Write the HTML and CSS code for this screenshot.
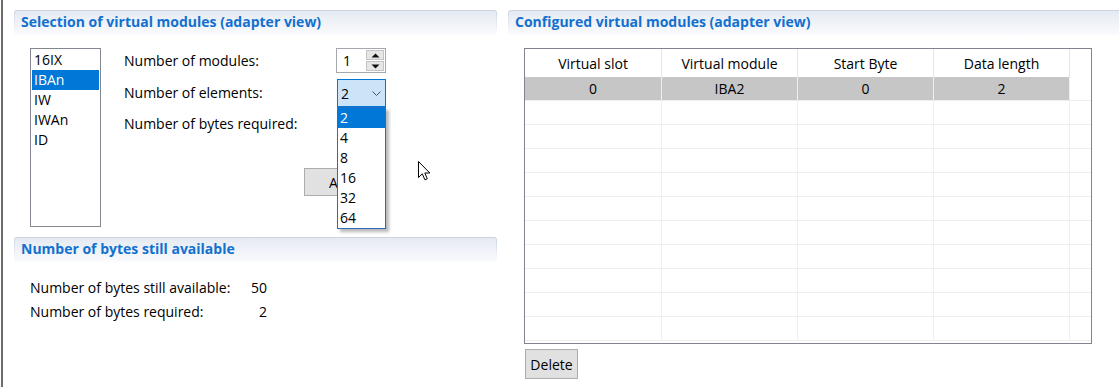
FILE: index.html
```html
<!DOCTYPE html>
<html>
<head>
<meta charset="utf-8">
<link rel="stylesheet" href="styles.css">
</head>
<body>
<div class="frame">
  <div class="col-left">
    <section class="sec">
      <div class="sec-head"><div class="sec-head-in">Selection of virtual modules (adapter view)</div></div>
      <div class="select-body">
        <ul class="listbox">
          <li>16IX</li>
          <li class="sel">IBAn</li>
          <li>IW</li>
          <li>IWAn</li>
          <li>ID</li>
        </ul>
        <div class="form">
          <div class="frow r1">
            <span class="lbl">Number of modules:</span>
            <div class="spinner">
              <span class="spin-val">1</span>
              <div class="spin-btns">
                <span class="spin-btn"><svg width="9" height="5" viewBox="0 0 9 5"><path d="M0.5 4.5 L4.5 0.5 L8.5 4.5 Z" fill="#111"/></svg></span>
                <span class="spin-btn"><svg width="9" height="5" viewBox="0 0 9 5"><path d="M0.5 0.5 L4.5 4.5 L8.5 0.5 Z" fill="#111"/></svg></span>
              </div>
            </div>
          </div>
          <div class="frow r2">
            <span class="lbl">Number of elements:</span>
            <div class="combo-wrap">
              <div class="combo">
                <span>2</span>
                <svg class="chev" width="9" height="5" viewBox="0 0 9 5"><path d="M0.5 0.5 L4.5 4.5 L8.5 0.5" fill="none" stroke="#555" stroke-width="1"/></svg>
              </div>
              <ul class="popup">
                <li class="sel">2</li>
                <li>4</li>
                <li>8</li>
                <li>16</li>
                <li>32</li>
                <li>64</li>
              </ul>
            </div>
          </div>
          <div class="frow r3">
            <span class="lbl">Number of bytes required:</span>
          </div>
          <button class="btn add-btn">Add</button>
        </div>
      </div>
    </section>
    <section class="sec">
      <div class="sec-head"><div class="sec-head-in">Number of bytes still available</div></div>
      <div class="avail-body">
        <span>Number of bytes still available:</span><span class="val">50</span>
        <span>Number of bytes required:</span><span class="val">2</span>
      </div>
    </section>
  </div>
  <div class="col-right">
    <section class="sec">
      <div class="sec-head"><div class="sec-head-in">Configured virtual modules (adapter view)</div></div>
      <div class="right-body">
        <div class="grid-box">
          <table class="grid">
            <colgroup><col class="c1"><col class="c2"><col class="c3"><col class="c4"><col></colgroup>
            <thead>
              <tr><th>Virtual slot</th><th>Virtual module</th><th>Start Byte</th><th>Data length</th><th></th></tr>
            </thead>
            <tbody>
              <tr class="selrow"><td>0</td><td>IBA2</td><td>0</td><td>2</td><td class="filler"></td></tr>
              <tr><td></td><td></td><td></td><td></td><td></td></tr>
              <tr><td></td><td></td><td></td><td></td><td></td></tr>
              <tr><td></td><td></td><td></td><td></td><td></td></tr>
              <tr><td></td><td></td><td></td><td></td><td></td></tr>
              <tr><td></td><td></td><td></td><td></td><td></td></tr>
              <tr><td></td><td></td><td></td><td></td><td></td></tr>
              <tr><td></td><td></td><td></td><td></td><td></td></tr>
              <tr><td></td><td></td><td></td><td></td><td></td></tr>
              <tr><td></td><td></td><td></td><td></td><td></td></tr>
              <tr><td></td><td></td><td></td><td></td><td></td></tr>
            </tbody>
          </table>
        </div>
        <button class="btn del-btn">Delete</button>
      </div>
    </section>
  </div>
</div>
<svg class="cursor" width="13" height="20" viewBox="0 0 13 20"><path d="M0.5 0.5 L0.5 16.5 L4.3 12.8 L6.9 18.8 L9.3 17.8 L6.8 12 L11.8 12 Z" fill="#fff" stroke="#000" stroke-width="1" stroke-linejoin="miter"/></svg>
</body>
</html>
```
FILE: styles.css
```css
* { box-sizing: border-box; }
html, body { margin: 0; padding: 0; background: #fff; }
body {
  width: 1119px;
  height: 387px;
  overflow: hidden;
  position: relative;
  font-family: "Open Sans", "Noto Sans", sans-serif;
  font-size: 14px;
  color: #000;
}
.frame {
  margin-left: 1px;
  height: 387px;
  border-left: 2px solid #6c6c6c;
  display: flex;
  gap: 11px;
  padding: 10px 0 0 11px;
}
.col-left { flex: 0 0 483px; display: flex; flex-direction: column; }
.col-right { flex: 0 0 640px; }
ul { list-style: none; margin: 0; padding: 0; }

.sec-head {
  height: 25px;
  padding: 1px 1px 0 1px;
  border-radius: 3px 3px 0 0;
  background: linear-gradient(to bottom, #c9d3e1, #ffffff);
}
.sec-head-in {
  height: 24px;
  border-radius: 2px 2px 0 0;
  background: linear-gradient(to bottom, #e5eaf3, #fafbfd);
  color: #1270cf;
  font-weight: bold;
  font-size: 14px;
  line-height: 22px;
  padding-left: 6px;
  white-space: nowrap;
}

.select-body {
  display: flex;
  align-items: flex-start;
  gap: 23px;
  padding: 13px 0 10px 16px;
}
.listbox {
  width: 71px;
  height: 179px;
  border: 1px solid #828790;
  padding: 1px;
}
.listbox li {
  height: 20px;
  line-height: 20px;
  padding-left: 2px;
}
.listbox li.sel { background: #0078d7; color: #fff; }

.form { display: flex; flex-direction: column; }
.frow {
  display: grid;
  grid-template-columns: 212px 50px;
  align-items: center;
}
.r1 { height: 25px; }
.r2 { height: 28px; margin-top: 6px; }
.r3 { height: 20px; margin-top: 7px; }
.lbl { line-height: 20px; white-space: nowrap; }

.spinner {
  width: 50px;
  height: 25px;
  border: 1px solid #a4a7ad;
  display: flex;
  align-items: stretch;
}
.spin-val { flex: 1; padding-left: 6px; line-height: 23px; }
.spin-btns {
  width: 19px;
  display: flex;
  flex-direction: column;
  gap: 1px;
  padding: 1px 1px 1px 0;
}
.spin-btn {
  flex: 1;
  background: #e6e6e6;
  border: 1px solid #c4c4c4;
  display: flex;
  align-items: center;
  justify-content: center;
}
.spin-btn svg { display: block; }

.combo-wrap { position: relative; margin-left: 1px; width: 49px; height: 28px; }
.combo {
  height: 28px;
  border: 1px solid #0078d7;
  background: #cce4f7;
  display: flex;
  align-items: center;
  justify-content: space-between;
  padding: 0 4px 0 3px;
}
.chev { display: block; }
.popup {
  position: absolute;
  top: 28px;
  left: 0;
  width: 49px;
  border: 1px solid #2a6cc0;
  background: #fff;
  box-shadow: 3px 3px 3px rgba(0, 0, 0, 0.28);
  z-index: 5;
}
.popup li { height: 20px; line-height: 20px; padding-left: 2px; }
.popup li.sel { background: #0078d7; color: #fff; }

.btn {
  font-family: inherit;
  font-size: 14px;
  color: #000;
  background: #e1e1e1;
  border: 1px solid #adadad;
  padding: 0;
  margin: 0;
}
.add-btn { width: 76px; height: 28px; margin-top: 34px; margin-left: 180px; }

.avail-body {
  display: grid;
  grid-template-columns: 221px 16px;
  grid-auto-rows: 24px;
  align-items: center;
  padding: 13px 0 0 16px;
  white-space: nowrap;
}
.avail-body .val { text-align: right; }

.right-body { padding: 13px 0 0 16px; }
.grid-box {
  width: 568px;
  height: 296px;
  border: 1px solid #80848d;
  overflow: hidden;
}
.grid {
  border-collapse: separate;
  border-spacing: 0;
  table-layout: fixed;
  width: 566px;
}
.grid col.c1 { width: 137px; }
.grid col.c2, .grid col.c3, .grid col.c4 { width: 136px; }
.grid th {
  height: 28px;
  font-weight: normal;
  text-align: center;
  border-right: 1px solid #e5e5e5;
  padding: 0;
  line-height: 27px;
  vertical-align: middle;
}
.grid td {
  height: 24px;
  padding: 0;
  text-align: center;
  border-right: 1px solid #efefef;
  border-bottom: 1px solid #efefef;
  background-clip: padding-box;
  line-height: 22px;
}
.grid th:last-child, .grid td:last-child { border-right: none; }
.grid tr.selrow td { background-color: #c6c6c6; }
.grid tr.selrow td.filler { background-color: transparent; }
.del-btn { width: 53px; height: 30px; margin-top: 5px; margin-left: 1px; display: block; }

.cursor { position: absolute; left: 418px; top: 161px; }
```
